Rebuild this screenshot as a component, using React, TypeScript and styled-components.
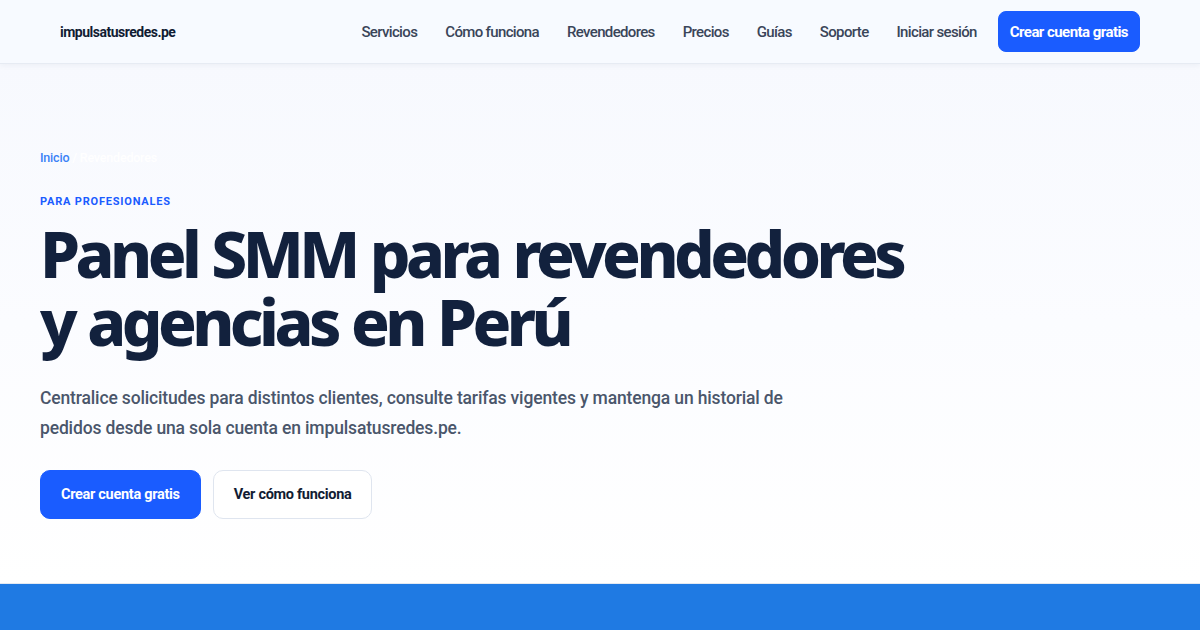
import React from 'react';
import styled, { createGlobalStyle } from 'styled-components';

const GlobalStyle = createGlobalStyle`
  * { box-sizing: border-box; }
  html, body { margin: 0; padding: 0; }
  body {
    font-family: Roboto, 'Noto Sans', 'Liberation Sans', sans-serif;
    background: #ffffff;
    color: #111c33;
  }
`;

const Page = styled.div`
  width: 1200px;
  height: 630px;
  overflow: hidden;
  display: flex;
  flex-direction: column;
`;

const Header = styled.header`
  height: 63px;
  flex: none;
  display: flex;
  align-items: center;
  justify-content: space-between;
  padding: 0 60px;
  background: #f7faff;
  box-shadow: 0 1px 0 #e6ebf3, 0 2px 6px rgba(30, 45, 80, 0.06);
  position: relative;
  z-index: 1;
`;

const Logo = styled.div`
  font-size: 14px;
  font-weight: 700;
  letter-spacing: -0.5px;
  color: #111c33;
`;

const Nav = styled.nav`
  display: flex;
  align-items: center;
  gap: 28px;

  & > :last-child {
    margin-left: -7px;
  }
`;

const NavLink = styled.a`
  font-size: 15px;
  font-weight: 500;
  letter-spacing: -0.65px;
  color: #3a4559;
  text-decoration: none;
`;

const Button = styled.a<{ $variant?: 'primary' | 'ghost'; $size?: 'sm' | 'lg' }>`
  display: inline-flex;
  align-items: center;
  justify-content: center;
  text-decoration: none;
  font-weight: 700;
  letter-spacing: ${(p) => (p.$size === 'lg' ? '-0.3px' : '-0.55px')};
  font-size: ${(p) => (p.$size === 'lg' ? '14.5px' : '15px')};
  height: ${(p) => (p.$size === 'lg' ? '49px' : '41px')};
  padding: 0 ${(p) => (p.$size === 'lg' ? '20px' : '11px')};
  border-radius: ${(p) => (p.$size === 'lg' ? '10px' : '8px')};
  background: ${(p) => (p.$variant === 'ghost' ? '#ffffff' : '#1a5cff')};
  color: ${(p) => (p.$variant === 'ghost' ? '#111c33' : '#ffffff')};
  border: 1px solid ${(p) => (p.$variant === 'ghost' ? '#dfe5ef' : '#1a5cff')};
`;

const Hero = styled.section`
  flex: 1;
  padding: 87px 40px 0;
  background: linear-gradient(180deg, #f7f9fe 0%, #fbfcff 50%, #ffffff 100%);
  border-bottom: 1px solid #e3e9f2;
`;

const Breadcrumb = styled.div`
  font-size: 12.5px;
  font-weight: 500;
  letter-spacing: -0.2px;
  color: #ffffff;
  a {
    color: #3b82f6;
    text-decoration: none;
  }
`;

const Eyebrow = styled.div`
  margin-top: 30px;
  font-size: 11px;
  font-weight: 700;
  letter-spacing: 0.8px;
  color: #1a5cff;
  text-transform: uppercase;
`;

const Title = styled.h1`
  margin: 12px 0 0;
  font-family: 'Noto Sans', Roboto, sans-serif;
  font-weight: 800;
  font-size: 64px;
  line-height: 68px;
  letter-spacing: -4.55px;
  word-spacing: 2px;
  color: #12213d;
`;

const Lead = styled.p`
  margin: 27px 0 0;
  max-width: 800px;
  font-size: 17.5px;
  font-weight: 500;
  line-height: 30px;
  letter-spacing: -0.15px;
  color: #4a566b;
`;

const Actions = styled.div`
  margin-top: 27px;
  display: flex;
  gap: 12px;
`;

const Band = styled.div`
  height: 46px;
  flex: none;
  background: #1f7ae3;
`;

export default function App() {
  return (
    <>
      <GlobalStyle />
      <Page>
        <Header>
          <Logo>impulsatusredes.pe</Logo>
          <Nav>
            <NavLink href="#">Servicios</NavLink>
            <NavLink href="#">Cómo funciona</NavLink>
            <NavLink href="#">Revendedores</NavLink>
            <NavLink href="#">Precios</NavLink>
            <NavLink href="#">Guías</NavLink>
            <NavLink href="#">Soporte</NavLink>
            <NavLink href="#">Iniciar sesión</NavLink>
            <Button href="#">Crear cuenta gratis</Button>
          </Nav>
        </Header>
        <Hero>
          <Breadcrumb>
            <a href="#">Inicio</a> / Revendedores
          </Breadcrumb>
          <Eyebrow>Para profesionales</Eyebrow>
          <Title>
            Panel SMM para revendedores
            <br />y agencias en Perú
          </Title>
          <Lead>
            Centralice solicitudes para distintos clientes, consulte tarifas vigentes y mantenga un
            historial de pedidos desde una sola cuenta en impulsatusredes.pe.
          </Lead>
          <Actions>
            <Button href="#" $size="lg">Crear cuenta gratis</Button>
            <Button href="#" $size="lg" $variant="ghost">Ver cómo funciona</Button>
          </Actions>
        </Hero>
        <Band />
      </Page>
    </>
  );
}
